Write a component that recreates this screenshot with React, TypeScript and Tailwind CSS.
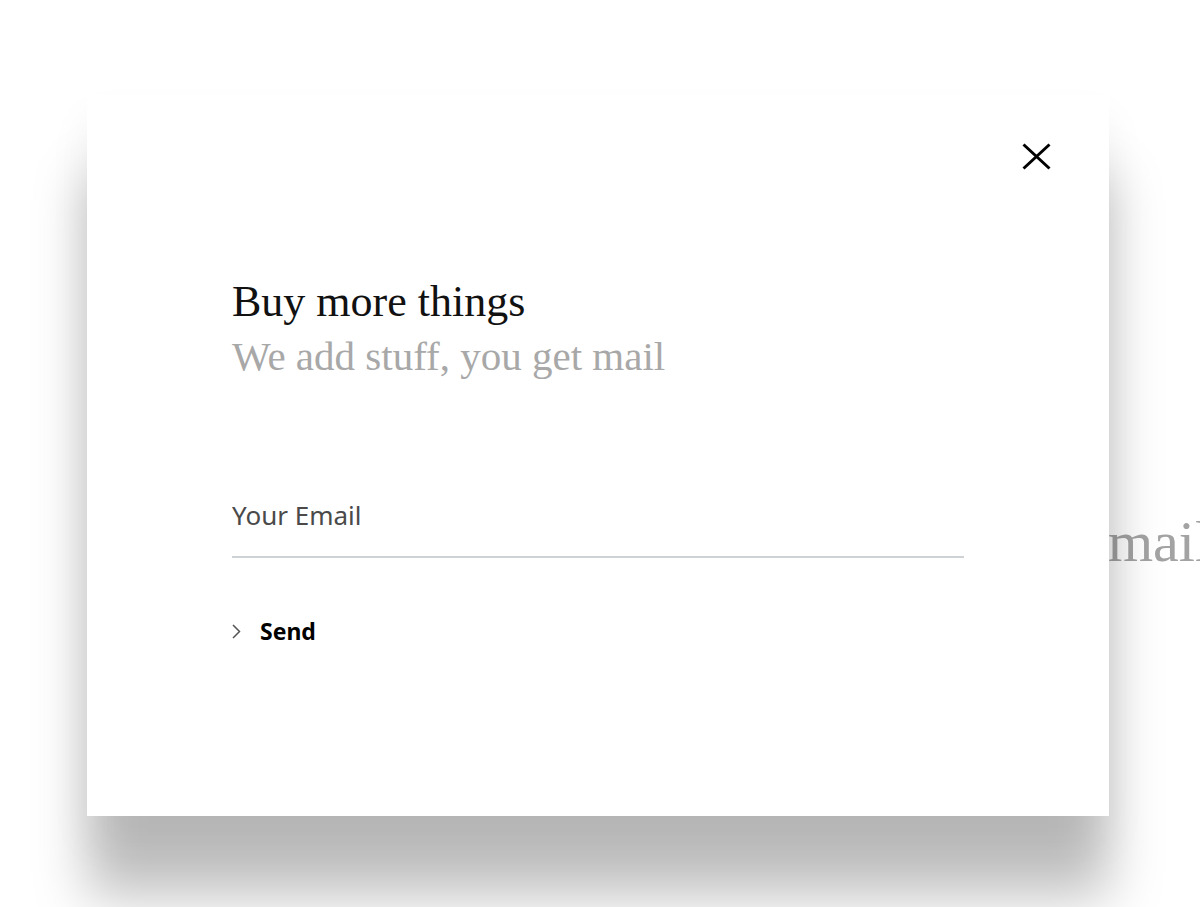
export default function App() {
  return (
    <main className="relative h-[907px] w-full overflow-hidden bg-white pt-[95px]">
      {/* page heading peeking out from behind the dialog */}
      <p className="absolute left-[1108px] top-[513px] font-['Liberation_Serif',serif] text-[58px] leading-none text-[#a3a3a3]">
        mail
      </p>

      <div className="relative ml-[87px] flex h-[721px] w-[1022px] flex-col bg-white shadow-[0_80px_50px_rgba(0,0,0,0.25),0_25px_40px_rgba(0,0,0,0.06)]">
        <div className="flex justify-end pr-[58px] pt-[48px]">
          <button type="button" aria-label="Close" className="block">
            <svg width="29" height="27" viewBox="0 0 29 27" fill="none">
              <path
                d="M1.5 1.5L27.5 25.5M27.5 1.5L1.5 25.5"
                stroke="#000"
                strokeWidth="3"
              />
            </svg>
          </button>
        </div>

        <div className="pl-[145px]">
          <h1 className="mt-[110px] font-['Liberation_Serif',serif] text-[44px] leading-none text-[#111]">
            Buy more things
          </h1>
          <p className="mt-[12px] font-['Liberation_Serif',serif] text-[41px] leading-none text-[#a8a8a8]">
            We add stuff, you get mail
          </p>

          <input
            type="email"
            placeholder="Your Email"
            className="mt-[120px] block w-[732px] border-b-2 border-[#cfd2d5] bg-transparent pb-[23px] font-['Noto_Sans',sans-serif] text-[26px] leading-none text-[#4a4a4a] outline-none placeholder:text-[#4a4a4a]"
          />

          <button
            type="button"
            className="mt-[62px] flex items-center gap-[19px] font-['Noto_Sans',sans-serif] text-[23px] font-bold leading-none text-black"
          >
            <svg width="9" height="15" viewBox="0 0 9 15" fill="none">
              <path d="M1 1L7.5 7.5L1 14" stroke="#555" strokeWidth="1.5" />
            </svg>
            Send
          </button>
        </div>
      </div>
    </main>
  );
}
